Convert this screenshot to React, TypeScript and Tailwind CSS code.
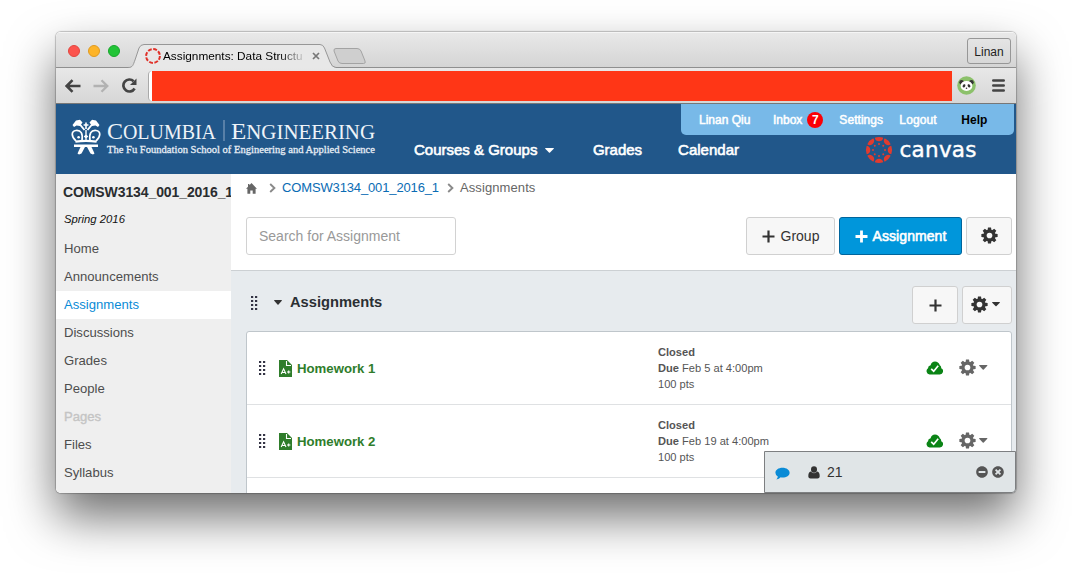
import React from "react";
import { FaMinusCircle, FaTimesCircle } from "react-icons/fa";

function Gear({ size = 17, color = "#333", hub = "#fff" }: { size?: number; color?: string; hub?: string }) {
  return (
    <svg width={size} height={size} viewBox="0 0 18 18" className="block shrink-0">
      {[0, 45, 90, 135].map((a) => (
        <path key={a} d="M7.400 0.400H10.600L11.200 4V14L10.600 17.600H7.400L6.800 14V4Z" fill={color} transform={`rotate(${a} 9 9)`} />
      ))}
      <circle cx="9" cy="9" r="6.3" fill={color} />
      <circle cx="9" cy="9" r="3" fill={hub} />
    </svg>
  );
}

function Caret({ color = "#333", w = 9, h = 5 }: { color?: string; w?: number; h?: number }) {
  return (
    <svg width={w} height={h} viewBox="0 0 10 6" preserveAspectRatio="none" className="block shrink-0">
      <path d="M0.6 0H9.4L10 0.6 5.6 5.4Q5 6 4.4 5.4L0 0.6Z" fill={color} />
    </svg>
  );
}

function Plus({ color = "#333", t = 2.2 }: { color?: string; t?: number }) {
  return (
    <svg width="13" height="13" viewBox="0 0 13 13" className="block shrink-0">
      <path d="M6.5 0.5V12.5M0.5 6.5H12.5" stroke={color} strokeWidth={t} />
    </svg>
  );
}

function Grip() {
  return (
    <svg width="7" height="15" viewBox="0 0 7 15" className="block shrink-0">
      {[0, 4, 8, 12].map((y) => (
        <React.Fragment key={y}>
          <rect x="0" y={y} width="2.2" height="2" fill="#333344" />
          <rect x="4" y={y} width="2.2" height="2" fill="#333344" />
        </React.Fragment>
      ))}
    </svg>
  );
}

function Chevron() {
  return (
    <svg width="7" height="10" viewBox="0 0 7 10" className="block shrink-0">
      <path d="M1.2 1L5.4 5 1.2 9" fill="none" stroke="#8a8a8a" strokeWidth="1.9" />
    </svg>
  );
}

function Home() {
  return (
    <svg width="11" height="11" viewBox="0 0 11 11" className="block shrink-0">
      <path d="M5.500 0L11 5.800H9.600V10.800H6.700V7.500H4.300V10.800H1.400V5.800H0L2 3.700V1H3.400V2.200Z" fill="#666" />
    </svg>
  );
}

function Bubble() {
  return (
    <svg width="15" height="13" viewBox="0 0 15 13" className="block shrink-0">
      <path d="M7.500 0.800C11.600 0.800 14.600 3 14.600 5.700S11.600 10.500 7.500 10.500Q6.500 10.500 5.700 10.300 4 12.300 1.400 12.500 2.700 11 2.800 9.500 0.400 8 0.400 5.700C0.400 3 3.400 0.800 7.500 0.800Z" fill="#0a8bd6" />
    </svg>
  );
}

function Person() {
  return (
    <svg width="12" height="13" viewBox="0 0 12 13" className="block shrink-0">
      <ellipse cx="6" cy="3.500" rx="3" ry="3.300" fill="#333" />
      <path d="M2.800 5.500Q6 9 9.200 5.500 11.800 6.200 11.700 10.500 11.600 12.600 9.500 12.600H2.500Q0.400 12.600 0.300 10.500 0.200 6.200 2.800 5.500Z" fill="#333" />
    </svg>
  );
}

function Crown() {
  return (
    <svg width="30" height="36" viewBox="0 0 30 36" className="block shrink-0">
      <g fill="#fff">
        <path d="M1.500 6L5 1.500 9 0.800 11.500 3.500 9 7 5.500 6.500 3 8Z" />
        <path d="M28.500 6L25 1.500 21 0.800 18.500 3.500 21 7 24.500 6.500 27 8Z" />
        <path d="M14.200 3.500h1.600v1.700h1.600v1.600h-1.600V10h-1.600V6.800h-1.600V5.200h1.600z" />
        <path d="M4.500 21.500Q15 19.800 25.500 21.500V23.800Q15 22 4.500 23.800Z" />
        <path d="M3 25.500H27V28H3Z" />
        <path d="M9.500 28H14L10.500 34.500 8 35.500 6.500 34.500Z" />
        <path d="M20.500 28H16L19.500 34.500 22 35.500 23.500 34.500Z" />
        <path d="M14.300 11H15.700V16L17.300 17.500 15.700 19V21.500H14.300V19L12.700 17.500 14.300 16Z" />
        <circle cx="7.600" cy="18.200" r="1.300" />
        <circle cx="22.400" cy="18.200" r="1.300" />
      </g>
      <g fill="none" stroke="#fff">
        <path d="M5 22C0 17.500 0 12 5 11.500S12 14.500 11 21.500" strokeWidth="1.700" />
        <path d="M25 22C30 17.500 30 12 25 11.500S18 14.500 19 21.500" strokeWidth="1.700" />
        <path d="M8.500 5L13.500 11M21.500 5L16.500 11" strokeWidth="1.900" />
      </g>
    </svg>
  );
}

function SchoolLogo() {
  return (
    <svg width="274" height="44" viewBox="0 0 274 44" className="block shrink-0 overflow-visible" fill="#fff" fontFamily="'Liberation Serif', serif">
      <text x="0" y="24.500" fontSize="24" textLength="109" lengthAdjust="spacingAndGlyphs" fill="#eef3f8">
        C<tspan fontSize="20">OLUMBIA</tspan>
      </text>
      <rect x="116.500" y="6" width="1" height="21" fill="#8fa9c6" />
      <text x="124" y="24.500" fontSize="24" textLength="144" lengthAdjust="spacingAndGlyphs" fill="#eef3f8">
        E<tspan fontSize="20">NGINEERING</tspan>
      </text>
      <text x="0" y="39" fontSize="11" textLength="268" lengthAdjust="spacingAndGlyphs" fill="#e6edf5" stroke="#e6edf5" strokeWidth="0.300">
        The Fu Foundation School of Engineering and Applied Science
      </text>
    </svg>
  );
}

function CanvasLogo() {
  return (
    <svg width="114" height="32" viewBox="0 0 114 32" className="block shrink-0 overflow-visible">
      {[0, 45, 90, 135, 180, 225, 270, 315].map((a) => (
        <g key={a} transform={`rotate(${a} 14 14)`} fill="#e23b2e">
          <path d="M9.800 1.700Q14 0.100 18.200 1.700C17.800 6.500 10.200 6.500 9.800 1.700Z" />
          <circle cx="14" cy="8" r="1" />
        </g>
      ))}
      <text x="34.500" y="20.500" fontFamily="'DejaVu Sans', sans-serif" fontSize="21.500" fill="#fff" stroke="#fff" strokeWidth="0.400" textLength="77" lengthAdjust="spacing">
        canvas
      </text>
    </svg>
  );
}

function Panda() {
  return (
    <svg width="19" height="19" viewBox="0 0 19 19" className="block shrink-0">
      <circle cx="9.500" cy="9.500" r="9.300" fill="#8cc16b" />
      <circle cx="4.600" cy="6.200" r="2.300" fill="#333" />
      <circle cx="14.400" cy="6.200" r="2.300" fill="#333" />
      <ellipse cx="9.500" cy="9.900" rx="5.900" ry="5" fill="#fff" />
      <ellipse cx="7" cy="9.800" rx="1.300" ry="1.700" fill="#333" transform="rotate(30 7 9.800)" />
      <ellipse cx="12" cy="9.800" rx="1.300" ry="1.700" fill="#333" transform="rotate(-30 12 9.800)" />
      <circle cx="9.500" cy="12.300" r="0.800" fill="#333" />
    </svg>
  );
}

function GradedDoc() {
  return (
    <svg width="13" height="17" viewBox="0 0 13 17" className="block shrink-0">
      <path d="M0 0H8L13 5V17H0Z" fill="#2f7d2b" />
      <path d="M7.500 1V5.500H12" fill="none" stroke="#fff" strokeWidth="1.100" />
      <path d="M2.200 14L4.600 8.800 7 14M3.200 12.500H6" fill="none" stroke="#fff" strokeWidth="1.100" />
      <path d="M8 12H11.400M9.700 10.400V13.600" stroke="#fff" strokeWidth="1.100" />
    </svg>
  );
}

function CloudCheck() {
  return (
    <svg width="17" height="14" viewBox="0 0 17 14" className="-mt-px block shrink-0">
      <path d="M3.600 13.500A3.500 3.500 0 0 1 2 7.200 3 3 0 0 1 4.600 4.200Q5.600 0.500 9 0.500T13.800 4.200Q15.400 4.800 15.200 7.200A3.300 3.300 0 0 1 13.800 13.500Z" fill="#0b8416" />
      <path d="M5.200 7.800L7.700 10.200 12.200 4.800" fill="none" stroke="#fff" strokeWidth="1.700" />
    </svg>
  );
}

const sections = ["Home", "Announcements", "Assignments", "Discussions", "Grades", "People", "Pages", "Files", "Syllabus"];

const rows = [
  { name: "Homework 1", due: "Feb 5 at 4:00pm" },
  { name: "Homework 2", due: "Feb 19 at 4:00pm" },
];

function TabStrip() {
  return (
    <div className="flex h-9 items-start bg-linear-to-b from-[#e9e9e9] to-[#d4d4d4] shadow-[inset_0_-1px_0_#8f8f8f,inset_0_1px_0_#f5f5f5]">
      <div className="flex gap-2 pt-[13px] pl-3">
        <span className="size-3 rounded-full border border-[#e2463f] bg-[#fc544e]" />
        <span className="size-3 rounded-full border border-[#e09a20] bg-[#fdb428]" />
        <span className="size-3 rounded-full border border-[#18a62c] bg-[#22c437]" />
      </div>
      <div className="relative mt-3 ml-2 h-6 w-[208px]">
        <svg width="208" height="24" className="absolute inset-0">
          <path d="M0 23.500C5 23.500 5 21 7 16L11 4Q12.500 0.500 16 0.500H192Q195 0.500 196.500 4L202 18Q204 23.500 208 23.500V24H0Z" fill="#e8e8e8" />
          <path d="M0 23.500C5 23.500 5 21 7 16L11 4Q12.500 0.500 16 0.500H192Q195 0.500 196.500 4L202 18Q204 23.500 208 23.500" fill="none" stroke="#979797" />
        </svg>
        <div className="relative flex h-6 items-center pl-[17px]">
          <svg width="16" height="16" viewBox="0 0 16 16" className="shrink-0">
            <circle cx="8" cy="8" r="6.900" fill="none" stroke="#e0322a" strokeWidth="2" strokeDasharray="3.900 1.519" />
          </svg>
          <span className="ml-0.5 w-[144px] overflow-hidden bg-linear-to-r from-black from-80% to-transparent bg-clip-text pt-px text-[11.8px] whitespace-nowrap text-transparent">
            Assignments: Data Structu
          </span>
          <svg width="8" height="8" viewBox="0 0 8 8" className="ml-[5px] shrink-0">
            <path d="M1 1L7 7M7 1L1 7" stroke="#777" strokeWidth="1.700" />
          </svg>
        </div>
      </div>
      <svg width="33" height="17" className="-ml-[3px] mt-4 shrink-0">
        <path d="M3 0.500H24Q27 0.500 28 3L32 13Q33 15.500 30.500 15.500H9Q6 15.500 5 13L1 3Q0.500 0.500 3 0.500Z" fill="#cfcfcf" stroke="#a3a3a3" />
      </svg>
      <div className="mt-1.5 mr-[5px] ml-auto flex h-[26px] w-11 items-center justify-center rounded-[3px] border border-[#979797] pt-px text-[12px] text-[#222]">Linan</div>
    </div>
  );
}

function Toolbar() {
  return (
    <div className="flex h-9 items-center border-b border-[#777] bg-linear-to-b from-[#e8e8e8] to-[#d6d6d6] pl-[9px]">
      <svg width="16" height="14" viewBox="0 0 16 14" className="shrink-0">
        <path d="M15.500 7H2M7.500 1.200L1.700 7 7.500 12.800" fill="none" stroke="#444" strokeWidth="2.600" />
      </svg>
      <svg width="16" height="14" viewBox="0 0 16 14" className="ml-3 shrink-0">
        <path d="M0.500 7H14M8.500 1.200L14.300 7 8.500 12.800" fill="none" stroke="#b2b2b2" strokeWidth="2.300" />
      </svg>
      <svg width="17" height="16" viewBox="0 0 17 16" className="ml-3 shrink-0">
        <path d="M12.600 3.200A6 6 0 1 0 13.600 10.500" fill="none" stroke="#444" strokeWidth="2.700" />
        <path d="M15.500 0.500V7H9Z" fill="#444" />
      </svg>
      <div className="ml-2.5 flex h-[30px] w-[804px] rounded-l-[4px] border-l border-[#a9a9a9] bg-white pl-[3px]">
        <div className="h-full flex-1 bg-[#ff3616]" />
      </div>
      <div className="ml-[5px]"><Panda /></div>
      <svg width="13" height="13" viewBox="0 0 13 13" className="ml-4 shrink-0">
        <path d="M1.300 1.500H11.700M1.300 6.500H11.700M1.300 11.500H11.700" stroke="#444" strokeWidth="2.600" strokeLinecap="round" />
      </svg>
    </div>
  );
}

function Header() {
  return (
    <header className="flex h-[70px] bg-[#21578a] text-white">
      <div className="mt-[15px] ml-[15px] w-[30px]"><Crown /></div>
      <div className="mt-2.5 ml-1.5"><SchoolLogo /></div>
      <div className="mt-[37px] ml-[33px] flex h-[18px] w-[325px] items-center text-[15px] [-webkit-text-stroke:0.6px_#fff]">
        <span className="whitespace-nowrap">Courses &amp; Groups</span>
        <span className="ml-2"><Caret color="#fff" w={9} h={5} /></span>
        <span className="ml-[38.5px]">Grades</span>
        <span className="ml-9">Calendar</span>
      </div>
      <div className="-ml-[58px] flex w-[335px] shrink-0 flex-col">
        <nav className="flex h-[31px] w-[333px] items-center rounded-b-[5px] bg-[#78b9e8] pl-[18px] text-[12px]">
          <span className="w-[74px] [-webkit-text-stroke:0.5px_#fff]">Linan Qiu</span>
          <span className="[-webkit-text-stroke:0.5px_#fff]">Inbox</span>
          <span className="ml-[5px] flex size-4 items-center justify-center rounded-full bg-[#fb0007] text-[12px] font-bold">7</span>
          <span className="ml-4 w-[60px] tracking-[0.05px] [-webkit-text-stroke:0.5px_#fff]">Settings</span>
          <span className="w-[62px] tracking-[0.1px] [-webkit-text-stroke:0.5px_#fff]">Logout</span>
          <span className="font-bold text-black">Help</span>
        </nav>
        <div className="mt-px ml-[184px]"><CanvasLogo /></div>
      </div>
    </header>
  );
}

function Sidebar() {
  return (
    <aside className="w-[175px] shrink-0 overflow-hidden bg-[#efefef]">
      <h2 className="mt-[9px] h-[18px] pl-[7px] text-[14px] leading-[18px] font-bold tracking-[-0.1px] whitespace-nowrap text-[#2a2d30]">COMSW3134_001_2016_1</h2>
      <p className="mt-[9px] h-[18px] pl-2 text-[11.3px] leading-[18px] text-[#111] italic">Spring 2016</p>
      <ul className="mt-[7px] text-[13.1px] leading-7">
        {sections.map((s) => (
          <li
            key={s}
            className={
              s === "Assignments"
                ? "h-7 bg-white pl-2 text-[#0a8bd6]"
                : s === "Pages"
                  ? "h-7 pl-2 text-[#c4c4c4] [-webkit-text-stroke:0.35px_#c4c4c4]"
                  : "h-7 pl-2 text-[#4d4d4d]"
            }
          >
            {s}
          </li>
        ))}
      </ul>
    </aside>
  );
}

function ChatBar() {
  return (
    <div className="absolute right-0 bottom-0 flex h-[42px] w-[252px] items-center rounded-br-[4px] border border-[#7d7f81] bg-[#e0e5e7] pl-2.5 text-[14px] text-[#333]">
      <span className="mt-0.5"><Bubble /></span>
      <span className="ml-[18px]"><Person /></span>
      <span className="ml-[7px]">21</span>
      <FaMinusCircle className="mr-1 ml-auto size-3 text-[#555]" />
      <FaTimesCircle className="mr-[11px] size-3 text-[#555]" />
    </div>
  );
}

export default function App() {
  return (
    <div className="h-[573px] w-[1072px] overflow-hidden bg-white pt-8 pl-14 font-['Liberation_Sans',Arial,sans-serif]">
      <div className="relative h-[461px] w-[960px] rounded-[5px] shadow-[0_24px_48px_rgba(0,0,0,0.57),0_0_1px_1px_rgba(0,0,0,0.22)]">
        <div className="flex h-full flex-col overflow-hidden rounded-[5px] bg-white">
          <TabStrip />
          <Toolbar />
          <Header />
          <div className="flex min-h-0 flex-1">
            <Sidebar />
            <main className="min-w-0 flex-1 overflow-hidden">
              <div className="flex h-[27px] items-center pl-[15px] text-[13px] text-[#666]">
                <span className="mt-0.5"><Home /></span>
                <span className="ml-3"><Chevron /></span>
                <span className="ml-1.5 tracking-[-0.14px] text-[#0a6cb4]">COMSW3134_001_2016_1</span>
                <span className="ml-2"><Chevron /></span>
                <span className="ml-1.5 tracking-[0.1px]">Assignments</span>
              </div>
              <div className="flex h-[70px] items-start gap-1 border-b border-[#ccd0d3] pt-4 pr-1 pl-[15px] text-[14px] text-[#333]">
                <div className="mr-auto flex h-[38px] w-[210px] items-center rounded-[3px] border border-[#d2d2d2] pl-3 text-[#999]">Search for Assignment</div>
                <button className="flex h-[38px] w-[89px] items-center justify-center gap-1.5 rounded-[3px] border border-[#d0d0d0] bg-[#f7f7f7]">
                  <Plus /> Group
                </button>
                <button className="flex h-[38px] w-[123px] items-center justify-center gap-[5px] rounded-[3px] border border-[#00659c] bg-[#0096db] tracking-[0.07px] text-white [-webkit-text-stroke:0.6px_#fff]">
                  <Plus color="#fff" t={2.800} /> Assignment
                </button>
                <button className="flex h-[38px] w-[46px] items-center justify-center rounded-[3px] border border-[#d0d0d0] bg-[#f7f7f7] pb-px">
                  <Gear hub="#f7f7f7" />
                </button>
              </div>
              <div className="h-full bg-[#e7ebee] pt-[15px] pr-1 pl-[15px]">
                <div className="flex h-[38px] items-center">
                  <span className="mb-1 ml-[5px]"><Grip /></span>
                  <span className="mb-1.5 ml-4"><Caret w={8} h={5} /></span>
                  <h3 className="mb-1.5 ml-2 text-[14.7px] font-bold text-[#2b2f33]">Assignments</h3>
                  <button className="ml-auto flex h-[38px] w-[46px] items-center justify-center rounded-[3px] border border-[#d0d0d0] bg-[#f7f7f7]"><Plus /></button>
                  <button className="ml-1 flex h-[38px] w-[50px] items-center justify-center gap-1 rounded-[3px] border border-[#d0d0d0] bg-[#f7f7f7] pr-1 pb-px">
                    <Gear hub="#f7f7f7" /><Caret w={8} h={4.5} />
                  </button>
                </div>
                <div className="mt-[7px] h-[240px] rounded-[3px] border border-[#bfc6cb] bg-white">
                  {rows.map((r) => (
                    <div key={r.name} className="flex h-[73px] items-center border-b border-[#dfe1e3]">
                      <span className="ml-3"><Grip /></span>
                      <span className="ml-[13px]"><GradedDoc /></span>
                      <span className="mt-0.5 ml-[5px] w-[361px] text-[13.2px] font-bold text-[#2f7d2b]">{r.name}</span>
                      <div className="w-[268px] text-[11.1px] leading-4 text-[#555]">
                        <div className="font-bold">Closed</div>
                        <div><b>Due</b> {r.due}</div>
                        <div>100 pts</div>
                      </div>
                      <CloudCheck />
                      <span className="-mt-px ml-4"><Gear color="#666" /></span>
                      <span className="-mt-px ml-[3px]"><Caret color="#666" w={8.500} h={5} /></span>
                    </div>
                  ))}
                </div>
              </div>
            </main>
          </div>
        </div>
        <ChatBar />
      </div>
    </div>
  );
}
